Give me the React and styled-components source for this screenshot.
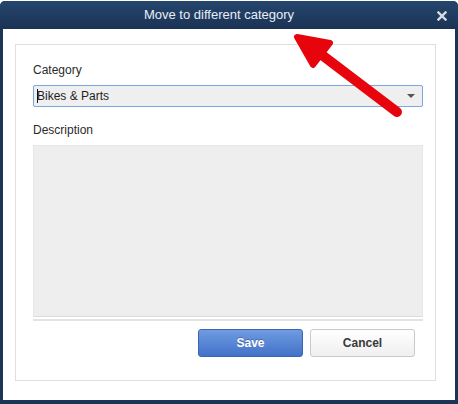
import React from "react";
import styled, { createGlobalStyle } from "styled-components";

const Global = createGlobalStyle`
  html, body { margin: 0; padding: 0; background: #ffffff; }
  body { font-family: "Liberation Sans", Arial, sans-serif; }
  * { box-sizing: border-box; }
`;

const Page = styled.div`
  position: relative;
  width: 458px;
  height: 404px;
  padding-top: 1px;
  overflow: hidden;
`;

const Window = styled.div`
  width: 458px;
  height: 403px;
  display: flex;
  flex-direction: column;
  background: #1c3456;
  border-radius: 5px 5px 0 0;
  padding: 0 3px 4px 3px;
`;

const TitleBar = styled.div`
  position: relative;
  height: 28px;
  flex: none;
  display: flex;
  align-items: center;
  justify-content: center;
  margin: 0 -3px;
  border-radius: 5px 5px 0 0;
  background: linear-gradient(#25466d, #1b3355);
  color: #e8eef6;
  font-size: 13px;
  padding: 0 20px 2px 0;
`;

const CloseButton = styled.span`
  position: absolute;
  right: 11px;
  top: 10px;
  width: 10px;
  height: 10px;
  display: flex;
`;

const Body = styled.div`
  flex: 1;
  background: #ffffff;
  padding: 15px 19px 19px 12px;
  display: flex;
`;

const Panel = styled.div`
  flex: 1;
  border: 1px solid #dfdfdf;
  padding: 18px 12px 23px 17px;
  display: flex;
  flex-direction: column;
`;

const Label = styled.div`
  font-size: 12px;
  line-height: 14px;
  color: #2b2b2b;
  margin-top: ${(p) => p.$top || 0}px;
  margin-bottom: 8px;
`;

const Select = styled.div`
  position: relative;
  height: 22px;
  border: 1px solid #7ca5e2;
  border-radius: 2px;
  background: #efefef;
  display: flex;
  align-items: center;
  padding-left: 3px;
  font-size: 12px;
  color: #1e1e1e;
`;

const Caret = styled.span`
  position: absolute;
  left: 3px;
  top: 3px;
  width: 1px;
  height: 14px;
  background: #111;
`;

const Triangle = styled.span`
  position: absolute;
  right: 7px;
  top: 8px;
  width: 0;
  height: 0;
  border-left: 4px solid transparent;
  border-right: 4px solid transparent;
  border-top: 4px solid #555;
`;

const TextArea = styled.div`
  height: 172px;
  background: #eeeeee;
  border: 1px solid #e6e6e6;
  border-bottom-color: #dcdcdc;
`;

const Divider = styled.div`
  height: 2px;
  margin-top: 2px;
  background: #e3e3e3;
`;

const ButtonRow = styled.div`
  display: flex;
  justify-content: flex-end;
  gap: 7px;
  margin-top: 8px;
  padding-right: 8px;
`;

const Button = styled.button`
  width: 105px;
  height: 28px;
  border-radius: 3px;
  font-family: "Liberation Sans", Arial, sans-serif;
  font-size: 12px;
  font-weight: bold;
  cursor: pointer;
  border: 1px solid ${(p) => (p.$primary ? "#3d64b2" : "#c9c9c9")};
  color: ${(p) => (p.$primary ? "#ffffff" : "#3a3a3a")};
  background: ${(p) =>
    p.$primary
      ? "linear-gradient(#6f9be0, #4272c9)"
      : "linear-gradient(#ffffff, #efefef)"};
  text-shadow: ${(p) => (p.$primary ? "0 -1px 0 rgba(0,0,0,0.25)" : "none")};
`;

const Annotation = styled.svg`
  position: absolute;
  left: 0;
  top: 0;
  pointer-events: none;
`;

export default function App() {
  return (
    <Page>
      <Global />
      <Window>
        <TitleBar>
          Move to different category
          <CloseButton>
            <svg width="10" height="10" viewBox="0 0 10 10">
              <path d="M1.5 1.5 L8.5 8.5 M8.5 1.5 L1.5 8.5" stroke="#d8dde4" strokeWidth="2.4" strokeLinecap="square" />
            </svg>
          </CloseButton>
        </TitleBar>
        <Body>
          <Panel>
            <Label>Category</Label>
            <Select>
              <Caret />
              Bikes &amp; Parts
              <Triangle />
            </Select>
            <Label $top={16}>Description</Label>
            <TextArea />
            <Divider />
            <ButtonRow>
              <Button $primary>Save</Button>
              <Button>Cancel</Button>
            </ButtonRow>
          </Panel>
        </Body>
      </Window>
      <Annotation width="458" height="404" viewBox="0 0 458 404">
        <line x1="318" y1="52" x2="397" y2="112" stroke="#e8040c" strokeWidth="10" strokeLinecap="round" />
        <polygon points="297,37 330,43 313,65" fill="#e8040c" stroke="#e8040c" strokeWidth="6" strokeLinejoin="round" />
      </Annotation>
    </Page>
  );
}
